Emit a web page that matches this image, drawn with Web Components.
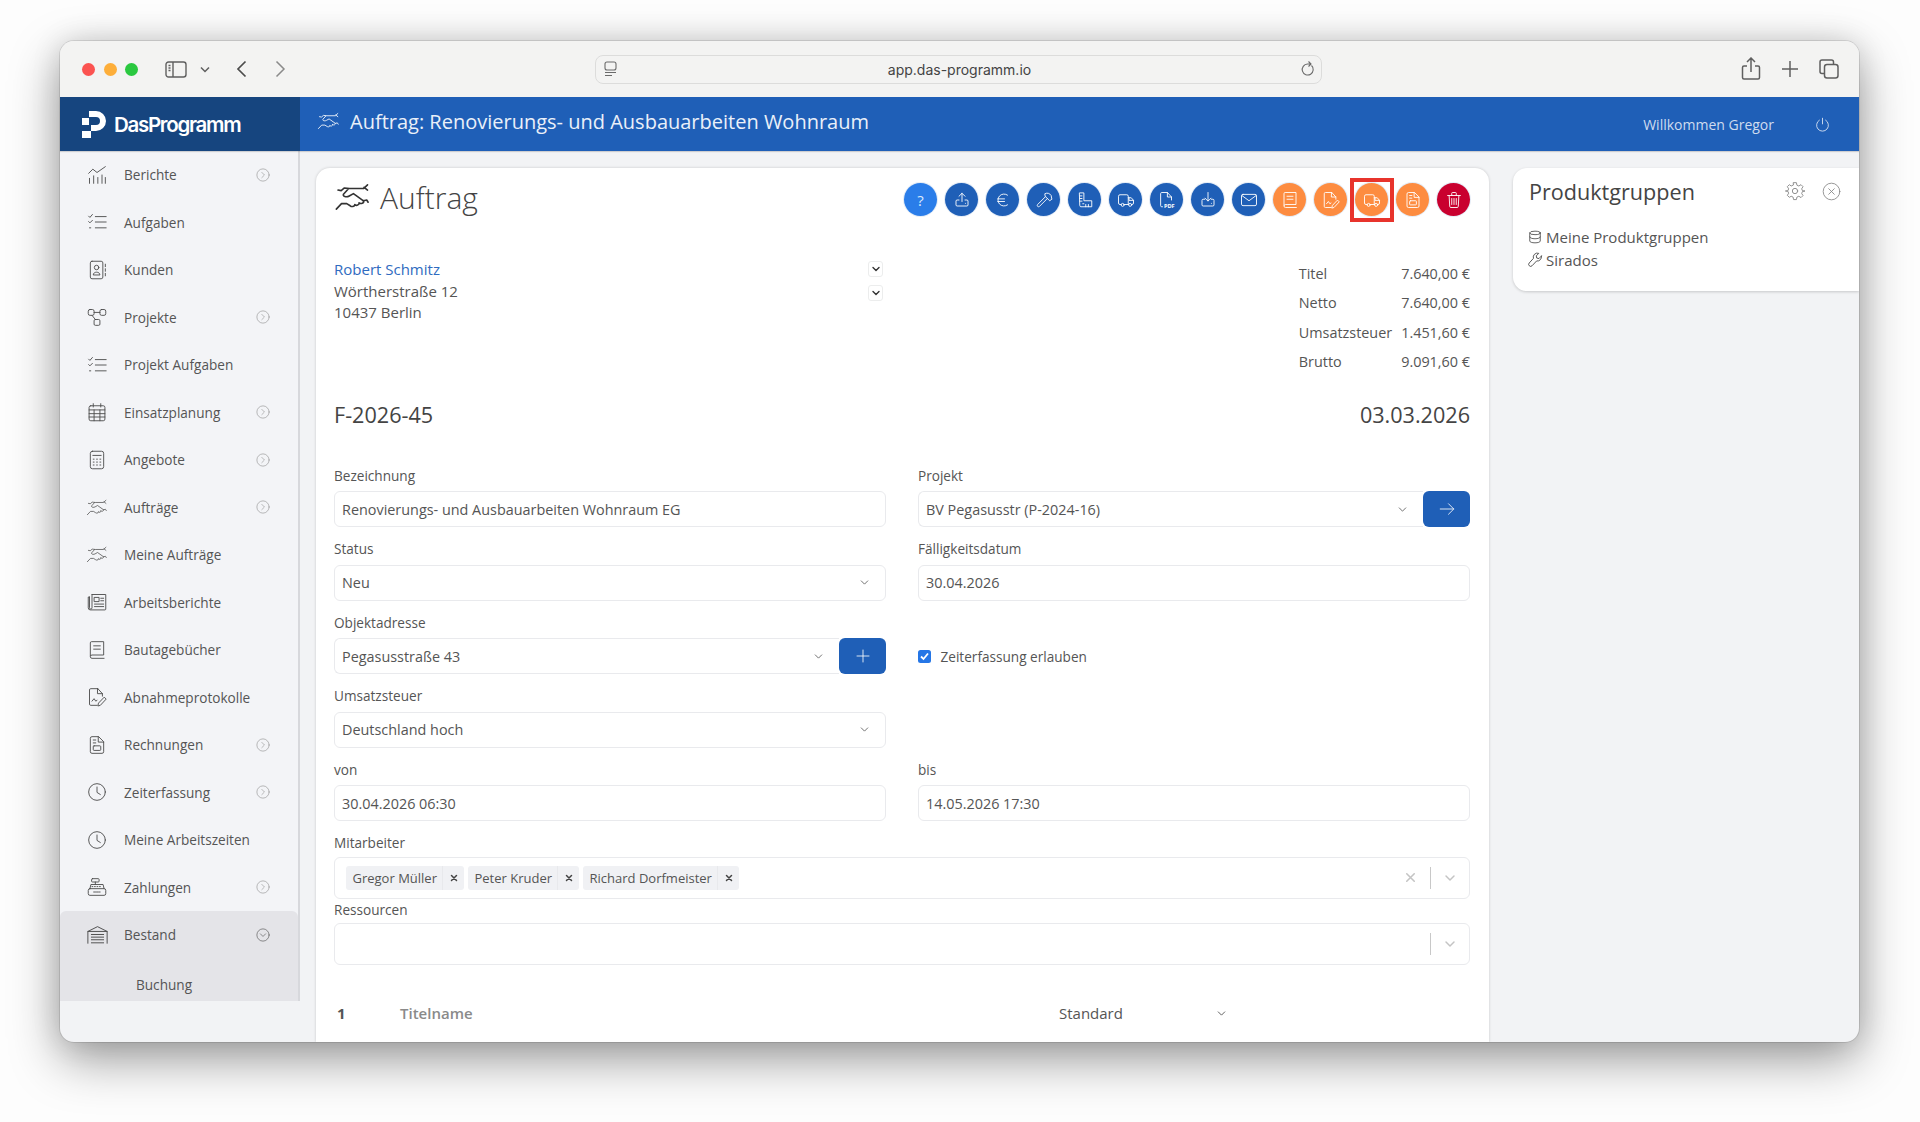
<!DOCTYPE html>
<html lang="de">
<head>
<meta charset="utf-8">
<title>Auftrag</title>
<style>
  html, body { margin: 0; height: 100%; background: #fdfdfd; }
  body { padding: 41px 60px 0; box-sizing: border-box; height: 1122px; overflow: hidden; font-family: "Open Sans", sans-serif; }
</style>
</head>
<body>
<browser-window url="app.das-programm.io">
  <app-header title-text="Auftrag: Renovierungs- und Ausbauarbeiten Wohnraum" user="Willkommen Gregor"></app-header>
  <div slot="side">
    <side-nav>
      <nav-item icon="chart" arrow>Berichte</nav-item>
      <nav-item icon="tasks">Aufgaben</nav-item>
      <nav-item icon="contact">Kunden</nav-item>
      <nav-item icon="project" arrow>Projekte</nav-item>
      <nav-item icon="tasks">Projekt Aufgaben</nav-item>
      <nav-item icon="calendar" arrow>Einsatzplanung</nav-item>
      <nav-item icon="calculator" arrow>Angebote</nav-item>
      <nav-item icon="handshake" arrow>Aufträge</nav-item>
      <nav-item icon="handshake">Meine Aufträge</nav-item>
      <nav-item icon="newspaper">Arbeitsberichte</nav-item>
      <nav-item icon="book">Bautagebücher</nav-item>
      <nav-item icon="filesign">Abnahmeprotokolle</nav-item>
      <nav-item icon="invoice" arrow>Rechnungen</nav-item>
      <nav-item icon="clock" arrow>Zeiterfassung</nav-item>
      <nav-item icon="clock">Meine Arbeitszeiten</nav-item>
      <nav-item icon="cash" arrow>Zahlungen</nav-item>
      <nav-group icon="warehouse" label="Bestand">
        <nav-sub>Buchung</nav-sub>
        <nav-sub>Bewegungen</nav-sub>
      </nav-group>
    </side-nav>
  </div>
  <order-card></order-card>
  <product-panel></product-panel>
</browser-window>

<script>
const ICONS = {
  chart: '<path d="M3 22v-6M8 22v-9M13 22v-7M18 22v-10M22 22v-7"/><path d="M2 10l5-5 5 4 10-7"/>',
  tasks: '<path d="M2 5l1.5 1.5L6.5 3M2 11.500l1.500 1.500 3-3M3 19h1.500"/><path d="M10 5.500h13M10 12h13M10 19h13"/>',
  contact: '<rect x="4" y="1.500" width="15" height="21" rx="2"/><circle cx="11.500" cy="9" r="2.700"/><path d="M7.500 17.500c0-4 8-4 8 0zM22 5v3M22 10.500v3M22 16v3"/>',
  project: '<rect x="1.500" y="3" width="7" height="7" rx="2"/><rect x="15.500" y="3" width="7" height="7" rx="2"/><rect x="8.500" y="15" width="7" height="7" rx="1.500"/><path d="M8.500 6.500h7M6 10l4 5"/>',
  calendar: '<rect x="2.500" y="4.500" width="19" height="18" rx="2"/><path d="M7.500 2v4M16.500 2v4M2.500 9.500h19M2.500 14h19M2.500 18h19M8.500 9.500v13M15.500 9.500v13"/>',
  calculator: '<rect x="4" y="1.500" width="16" height="21" rx="2.500"/><path d="M7 6.500h10M7.500 11h1M11.500 11h1M15.500 11h1M7.500 14.500h1M11.500 14.500h1M15.500 14.500h1M7.500 18h1M11.500 18h1M15.500 18h1"/>',
  handshake: '<path d="M29 1.500l-3.500 3.200H13.500L9 4.200 6.200 6.500 3.500 6M12.500 4.800L8.200 9.600c-1 1.800 2.400 3 5 1.500l3.600-2 8.700 6.200 2.800-.7 1.200 1.900"/><path d="M25.500 15.200c.8 2.200-2.400 3-3.800 1.800M21.700 17c.4 2-2.400 2.800-3.700 1.600M18 18.600c-.2 1.800-2.800 2-4 1L11 17.700H6.500L2 22.500"/><path d="M29 6L26 3.600"/>',
  newspaper: '<path d="M6 3h16.500v17.500a1 1 0 0 1-1 1H4a2.500 2.500 0 0 1-2.500-2.500V6H3"/><path d="M3 6v13a1.500 1.500 0 0 0 3 0V3"/><rect x="9" y="6.500" width="5.500" height="5"/><path d="M16.500 7.500h3.500M16.500 10.500h3.500M9 14.500h11M9 17.500h11"/>',
  book: '<path d="M4 19V3.500a1.500 1.500 0 0 1 1.500-1.500H20v16H6a2 2 0 0 0-2 2v0a2 2 0 0 0 2 2h14.500"/><path d="M8 7h8M8 11h8"/>',
  filesign: '<path d="M13 2H4.500A1.500 1.500 0 0 0 3 3.500v17A1.500 1.500 0 0 0 4.500 22H12M13 2l5.500 6H13zM18.500 8v3"/><path d="M6 17l2.500-3 2 3 1.500-1"/><path d="M21 12.500l2 2-7 7.500-3 .8.700-3z"/>',
  invoice: '<path d="M13.500 2H6a2 2 0 0 0-2 2v16a2 2 0 0 0 2 2h12a2 2 0 0 0 2-2V8.500zM13.500 2v6.500H20"/><rect x="7.500" y="13" width="9" height="5.500" rx="1"/><path d="M7.500 6h3M7.500 9.500h3"/>',
  clock: '<circle cx="12" cy="12" r="10"/><path d="M12 6v6.500l4 2.500"/>',
  cash: '<rect x="1.500" y="14" width="21" height="8" rx="2"/><path d="M3.500 14l1.200-5h14.600l1.200 5M10 9V6"/><rect x="5.500" y="2" width="9" height="4" rx="1"/><path d="M6 11.500h1M9 11.500h1M12 11.500h1M15 11.500h1M8 18h8" stroke-dasharray="1.200 1"/>',
  warehouse: '<path d="M1 22V8.500L12 3l11 5.500V22"/><path d="M1 8.500h22M5 12h14M5 15h14M5 18h14M5 21.500h14"/>',
  upload: '<path d="M12 14V3M8 7l4-4 4 4M8 12H5.500A1.500 1.500 0 0 0 4 13.500v5A1.500 1.500 0 0 0 5.500 20h13a1.500 1.500 0 0 0 1.500-1.500v-5a1.500 1.500 0 0 0-1.500-1.500H16M16.500 16.500h.01"/>',
  euro: '<path d="M18 5.500a8 8 0 1 0 0 13M5 10.500h9M5 14h9"/>',
  hammer: '<path d="M13.500 3.500c3-1.500 6-.5 8 2.500l1 5-3 2-5.500-5.500zM14 7.500L3.500 18a2 2 0 0 0 0 2.500 2 2 0 0 0 2.500 0l10.500-10.500"/>',
  ruler: '<path d="M5 2.500h5.500v10.500H21v8H6.500A1.500 1.500 0 0 1 5 19.500zM5 6.500h3M5 10h3M5 13.500h3M13 21v-3M16.500 21v-3M9 17l1.500 0"/>',
  truck: '<path d="M5.500 18H4a2 2 0 0 1-2-2V7a2 2 0 0 1 2-2h9a2 2 0 0 1 2 2v11h-5.500M15 9h4l3 3.500V16a2 2 0 0 1-2 2h-.500M15 18h.500M16 9v3.500h6"/><circle cx="7.500" cy="18.500" r="2"/><circle cx="17.500" cy="18.500" r="2"/>',
  pdf: '<path d="M6 21H5a1.500 1.500 0 0 1-1.500-1.500v-16A1.500 1.500 0 0 1 5 2h7.500L18 8v4M12.500 2v6H18"/><text x="8" y="22" font-family="Open Sans, sans-serif" font-weight="700" font-size="7.500" fill="currentColor" stroke="none" textLength="14">PDF</text>',
  download: '<path d="M12 2v11M8 9.500l4 4 4-4M7.500 11H5.500A1.500 1.500 0 0 0 4 12.500v6A1.500 1.500 0 0 0 5.500 20h13a1.500 1.500 0 0 0 1.500-1.500v-6a1.500 1.500 0 0 0-1.500-1.500h-2M16.500 16.500h.01"/>',
  mail: '<rect x="2" y="4.500" width="20" height="15" rx="2"/><path d="M2.500 6l9.500 7 9.500-7"/>',
  trash: '<path d="M3.500 6h17M9 6V3a1 1 0 0 1 1-1h4a1 1 0 0 1 1 1v3M5.500 6l.800 14.500A1.500 1.500 0 0 0 7.800 22h8.400a1.500 1.500 0 0 0 1.500-1.500L18.500 6M9 10v8M12 10v8M15 10v8"/>',
  db: '<ellipse cx="12" cy="5" rx="9" ry="3"/><path d="M3 5v14c0 1.700 4 3 9 3s9-1.300 9-3V5M3 12c0 1.700 4 3 9 3s9-1.300 9-3"/>',
  wrench: '<path d="M21.500 6.500l-4 4-3.500-.8-.8-3.500 4-4a6.500 6.500 0 0 0-8.500 8L2 17.500a3 3 0 0 0 4.500 4.500l7.300-7.700a6.500 6.500 0 0 0 7.700-7.800z"/>',
  gear: '<circle cx="12" cy="12" r="3.200"/><path d="M10.300 2h3.400l.6 3 2.300 1 2.600-1.600 2.400 2.400L20 9.400l1 2.300 3 .3v0l-3 .6-1 2.300 1.600 2.600-2.400 2.400-2.600-1.600-2.300 1-.6 3h-3.400l-.6-3-2.300-1L5.200 19.600l-2.400-2.400L4.400 14.600l-1-2.300L.5 12l2.900-.3 1-2.300-1.600-2.600 2.400-2.400L7.400 6l2.300-1z"/>',
  circlex: '<circle cx="12" cy="12" r="10.500"/><path d="M8.500 8.500l7 7M15.500 8.500l-7 7"/>',
  power: '<path d="M12 2v9"/><path d="M7 5a9.500 9.500 0 1 0 10 0"/>',
  arrowright: '<path d="M3 12h18M14 5l7 7-7 7"/>',
  plus: '<path d="M12 4v16M4 12h16"/>',
  chevron: '<path d="M6 9l6 6 6-6"/>',
  circleright: '<circle cx="12" cy="12" r="10.500"/><path d="M10 7.500l4.500 4.500-4.500 4.500"/>',
  circledown: '<circle cx="12" cy="12" r="10.500"/><path d="M7.500 10l4.500 4.500 4.500-4.500"/>',
  x: '<path d="M6 6l12 12M18 6L6 18"/>'
}

function svgIcon(name, w, h, sw){
  const vb = name === 'handshake' ? '0 0 32 24' : '0 0 24 24'
  return `<svg viewBox="${vb}" width="${w}" height="${h || w}" fill="none" stroke="currentColor" stroke-width="${sw || 1.3}" stroke-linecap="round" stroke-linejoin="round" aria-hidden="true">${ICONS[name]}</svg>`
}

class BrowserWindow extends HTMLElement{
  constructor(){
    super()
    this.attachShadow({mode:'open'})
    this.shadowRoot.innerHTML = `
    <style>
      :host { display: flex; flex-direction: column; width: 1799px; height: 1001px; border-radius: 14px; overflow: hidden;
        box-shadow: 0 0 0 1px rgba(0,0,0,.1), 0 18px 50px rgba(0,0,0,.38), 0 0 30px rgba(0,0,0,.12); background: #f2f3f5; }
      .toolbar { height: 56px; flex: none; background: #f3f3f2; display: flex; align-items: center; color: #5f5f5f; position: relative; box-sizing: border-box; padding-left: 22px; }
      .dots { display: flex; gap: 8.500px; }
      .dot { width: 13px; height: 13px; border-radius: 50%; }
      .tools { display: flex; align-items: center; margin-left: 27px; }
      .tools svg { display: block; }
      .urlbar { width: 727px; height: 29px; margin-left: 309px; border: 1px solid #dcdcdb; border-radius: 8px; box-sizing: border-box;
        display: flex; align-items: center; justify-content: space-between; padding: 0 6px 0 8px; }
      .url { font: 14px "Inter", "Liberation Sans", sans-serif; color: #444; }
      .right { display: flex; align-items: center; margin-left: auto; margin-right: 20px; gap: 20px; }
      .body { flex: 1; display: grid; grid-template-columns: 240px 1fr; min-height: 0; }
      .main { display: flex; gap: 24px; padding: 17px 0 0 16px; min-height: 0; overflow: hidden; }
    </style>
    <div class="toolbar">
      <div class="dots">
        <span class="dot" style="background:#fb5351"></span>
        <span class="dot" style="background:#fdae3a"></span>
        <span class="dot" style="background:#2ac840"></span>
      </div>
      <div class="tools">
        <svg width="22" height="17" viewBox="0 0 22 17" fill="none" stroke="currentColor" stroke-width="1.400"><rect x="1" y="1" width="20" height="15" rx="2.500"/><path d="M8 1v15M3.500 4.500h2M3.500 7h2M3.500 9.500h2"/></svg>
        <svg style="margin-left:13px" width="10" height="7" viewBox="0 0 10 7" fill="none" stroke="currentColor" stroke-width="1.500"><path d="M1 1.500l4 4 4-4"/></svg>
        <svg style="margin-left:26px" width="11" height="18" viewBox="0 0 11 18" fill="none" stroke="#4c4c4c" stroke-width="1.700"><path d="M9.500 1.500L2 9l7.500 7.500"/></svg>
        <svg style="margin-left:28px" width="11" height="18" viewBox="0 0 11 18" fill="none" stroke="#8a8a8a" stroke-width="1.500"><path d="M1.500 1.500L9 9l-7.500 7.500"/></svg>
      </div>
      <div class="urlbar">
        <svg width="14" height="16" viewBox="0 0 14 16" fill="none" stroke="#6a6a6a" stroke-width="1.100"><rect x="1" y="1" width="11" height="8" rx="2"/><path d="M1 11.500h11M1 14.500h7"/></svg>
        <span class="url"></span>
        <svg width="14" height="16" viewBox="0 0 14 16" fill="none" stroke="#6a6a6a" stroke-width="1.100"><path d="M10.500 4.500a5.500 5.500 0 1 1-4-1.500H10M7.500 0.500L10 3 7.500 5.500"/></svg>
      </div>
      <div class="right">
        <svg width="20" height="24" viewBox="0 0 20 24" fill="none" stroke="currentColor" stroke-width="1.500"><path d="M6 9H3a1.500 1.500 0 0 0-1.500 1.500v10A1.500 1.500 0 0 0 3 22h14a1.500 1.500 0 0 0 1.500-1.500v-10A1.500 1.500 0 0 0 17 9h-3M10 15V1.500M6 5l4-4 4 4"/></svg>
        <svg width="18" height="18" viewBox="0 0 18 18" fill="none" stroke="currentColor" stroke-width="1.500"><path d="M9 1v16M1 9h16"/></svg>
        <svg width="20" height="20" viewBox="0 0 20 20" fill="none" stroke="currentColor" stroke-width="1.500"><rect x="5.500" y="5.500" width="13.500" height="13.500" rx="2.500"/><path d="M5.500 14.500H3A2 2 0 0 1 1 12.500V3a2 2 0 0 1 2-2h9.500a2 2 0 0 1 2 2v2.500"/></svg>
      </div>
    </div>
    <slot></slot>`
    // the header is the first light child, body wraps the rest
    const wrap = document.createElement('div')
    wrap.className = 'body'
    wrap.innerHTML = `<slot name="side"></slot><div class="main"><slot name="main"></slot></div>`
    this.shadowRoot.appendChild(wrap)
  }
  connectedCallback(){
    this.shadowRoot.querySelector('.url').textContent = this.getAttribute('url')
    this.querySelectorAll(':scope > order-card, :scope > product-panel').forEach(el => el.slot = 'main')
  }
}

class AppHeader extends HTMLElement{
  constructor(){
    super()
    this.attachShadow({mode:'open'})
  }
  connectedCallback(){
    this.shadowRoot.innerHTML = `
    <style>
      :host { display: flex; height: 54px; background: #1f5fb7; color: #fff; align-items: stretch; box-shadow: 0 1px 1px rgba(0,0,0,.15); position: relative; }
      .brand { width: 240px; background: #16457f; display: flex; align-items: center; box-sizing: border-box; padding-left: 22px; gap: 8px; }
      .word { font: 600 20.500px "Inter", "Open Sans", sans-serif; letter-spacing: -1.300px; }
      .title { display: flex; align-items: center; gap: 10px; padding: 0 0 6px 17px; font-size: 20px; color: #eaf0f9; }
      .user { margin-left: auto; display: flex; align-items: center; gap: 41px; padding-right: 29px; font-size: 14px; color: #cfdcef; }
    </style>
    <div class="brand">
      <svg width="24" height="27" viewBox="0 0 24 27" fill="#fff"><path d="M7 0h7a10 10 0 0 1 0 20H9v-6h5a4 4 0 0 0 0-8H7z"/><rect x="0" y="7" width="7" height="7"/><rect x="0" y="20" width="9" height="7"/></svg>
      <span class="word">DasProgramm</span>
    </div>
    <div class="title">${svgIcon('handshake', 23, 18, 1.3)}<span>${this.getAttribute('title-text')}</span></div>
    <div class="user"><span>${this.getAttribute('user')}</span>${svgIcon('power', 15, 15, 1.500)}</div>`
  }
}

class SideNav extends HTMLElement{
  constructor(){
    super()
    this.attachShadow({mode:'open'})
    this.shadowRoot.innerHTML = `
    <style>
      :host { display: block; width: 240px; height: 850px; box-sizing: border-box; background: #f3f4f7; border-right: 2px solid #d7d8dc; overflow: hidden; }
    </style>
    <slot></slot>`
  }
}

class NavItem extends HTMLElement{
  constructor(){
    super()
    this.attachShadow({mode:'open'})
  }
  connectedCallback(){
    const arrow = this.hasAttribute('arrow') ? `<span class="arrow">${svgIcon('circleright', 14, 14, 1)}</span>` : ''
    this.shadowRoot.innerHTML = `
    <style>
      :host { display: flex; align-items: center; height: 47.500px; padding-left: 25px; font-size: 13.600px; color: #555; box-sizing: border-box; }
      .ic { width: 24px; display: flex; justify-content: center; color: #4d4d4d; margin-right: 15px; }
      .arrow { margin-left: auto; margin-right: 28px; display: flex; color: #8b8b8b; }
    </style>
    <span class="ic">${svgIcon(this.getAttribute('icon'), this.getAttribute('icon') === 'handshake' ? 22 : 20, this.getAttribute('icon') === 'handshake' ? 17 : 20, 1.100)}</span>
    <slot></slot>${arrow}`
  }
}

class NavGroup extends HTMLElement{
  constructor(){
    super()
    this.attachShadow({mode:'open'})
  }
  connectedCallback(){
    this.shadowRoot.innerHTML = `
    <style>
      :host { display: block; background: #e4e4e8; border-radius: 6px 6px 0 0; padding-bottom: 20px; font-size: 13.600px; color: #555; }
      .head { display: flex; align-items: center; height: 47.500px; padding-left: 25px; margin-bottom: 5px; }
      .ic { width: 24px; display: flex; justify-content: center; color: #4d4d4d; margin-right: 15px; }
      .arrow { margin-left: auto; margin-right: 28px; display: flex; color: #555; }
    </style>
    <div class="head"><span class="ic">${svgIcon(this.getAttribute('icon'), 21, 21, 1.100)}</span><span>${this.getAttribute('label')}</span><span class="arrow">${svgIcon('circledown', 14, 14, 1.100)}</span></div>
    <slot></slot>`
  }
}

class NavSub extends HTMLElement{
  constructor(){
    super()
    this.attachShadow({mode:'open'})
    this.shadowRoot.innerHTML = `
    <style>
      :host { display: flex; align-items: center; height: 41.500px; padding-left: 76px; font-size: 13.600px; color: #555; }
    </style>
    <slot></slot>`
  }
}

class IconBtn extends HTMLElement{
  constructor(){
    super()
    this.attachShadow({mode:'open'})
  }
  connectedCallback(){
    const name = this.getAttribute('icon')
    const inner = name === 'help' ? '<span class="q">?</span>' : svgIcon(name, 18, 18, 1.200)
    this.shadowRoot.innerHTML = `
    <style>
      :host { display: flex; width: 33px; height: 33px; border-radius: 50%; align-items: center; justify-content: center; color: #fff; position: relative;
        background: var(--c, #1f5fb7); box-shadow: 0 0 0 1px rgba(31,95,183,.12); }
      .q { font-size: 15px; color: #dce9fb; }
      :host([marked])::after { content: ''; position: absolute; left: -5.500px; top: -5.500px; width: 36px; height: 36px; border: 4px solid #e8342c; }
    </style>
    ${inner}`
  }
}

class FormField extends HTMLElement{
  constructor(){
    super()
    this.attachShadow({mode:'open'})
  }
  connectedCallback(){
    this.shadowRoot.innerHTML = `
    <style>
      :host { display: block; margin-bottom: 11px; min-width: 0; }
      :host([tight]) { margin-bottom: 0; }
      label { display: block; font-size: 13.600px; line-height: 21px; color: #555; margin-bottom: 5.500px; }
      :host([tight]) label { margin-bottom: 3.500px; }
    </style>
    <label>${this.getAttribute('label')}</label>
    <slot></slot>`
  }
}

class TextBox extends HTMLElement{
  constructor(){
    super()
    this.attachShadow({mode:'open'})
  }
  connectedCallback(){
    const chev = this.hasAttribute('select') ? svgIcon('chevron', 13, 13, 1.700) : ''
    this.shadowRoot.innerHTML = `
    <style>
      :host { display: flex; flex: 1; min-width: 0; align-items: center; justify-content: space-between; height: 36px; box-sizing: border-box;
        border: 1px solid #e9eaed; border-radius: 6px; padding: 0 14px 0 7px; font-size: 14.400px; color: #555; background: #fff; }
      :host([joined]) { border-radius: 6px 0 0 6px; border-right: 0; }
      svg { color: #666; }
    </style>
    <span><slot></slot></span>${chev}`
  }
}

class SideBtn extends HTMLElement{
  constructor(){
    super()
    this.attachShadow({mode:'open'})
  }
  connectedCallback(){
    this.shadowRoot.innerHTML = `
    <style>
      :host { display: flex; flex: none; width: 47px; height: 36px; background: #1f5fb7; color: #fff; border-radius: 6px; align-items: center; justify-content: center; }
    </style>
    ${svgIcon(this.getAttribute('icon'), 18, 18, 1.100)}`
  }
}

class MultiBox extends HTMLElement{
  constructor(){
    super()
    this.attachShadow({mode:'open'})
  }
  connectedCallback(){
    const clear = this.hasAttribute('clearable') ? `<span class="cl">${svgIcon('x', 15, 15, 2.500)}</span>` : ''
    this.shadowRoot.innerHTML = `
    <style>
      :host { display: flex; align-items: center; height: 42px; box-sizing: border-box; border: 1px solid #e9eaed; border-radius: 6px; padding-left: 11px; padding-right: 11px; gap: 4px; }
      .end { margin-left: auto; display: flex; align-items: center; color: #c4c4c4; }
      .cl { display: flex; margin-right: 12px; }
      .sep { width: 1px; height: 22px; background: #c8c8c8; margin-right: 11px; }
      svg { display: block; }
    </style>
    <slot></slot>
    <div class="end">${clear}<span class="sep"></span>${svgIcon('chevron', 16, 16, 2.200)}</div>`
  }
}

class TagChip extends HTMLElement{
  constructor(){
    super()
    this.attachShadow({mode:'open'})
    this.shadowRoot.innerHTML = `
    <style>
      :host { display: flex; align-items: center; height: 24px; background: #f0f1f4; border-radius: 3px; padding-left: 6.500px; font-size: 13px; color: #555; }
      .x { margin-left: 5px; padding: 0 5px 0 6px; display: flex; color: #444; border-left: 1px solid #e8e9ec; height: 24px; align-items: center; }
    </style>
    <slot></slot><span class="x">${svgIcon('x', 10, 10, 3.600)}</span>`
  }
}

class OrderCard extends HTMLElement{
  constructor(){
    super()
    this.attachShadow({mode:'open'})
    const actions = [
      ['help','#2a7de9'],['upload'],['euro'],['hammer'],['ruler'],['truck'],['pdf'],['download'],['mail'],
      ['book','#fd8c40'],['filesign','#fd8c40'],['truck','#fd8c40',1],['invoice','#fd8c40'],['trash','#c9002f']
    ].map(([n,c,m]) => `<icon-btn icon="${n}"${c ? ` style="--c:${c}"` : ''}${m ? ' marked' : ''}></icon-btn>`).join('')
    this.shadowRoot.innerHTML = `
    <style>
      :host { display: block; flex: none; width: 1173px; box-sizing: border-box; height: 874px; background: #fff; border-radius: 14px 14px 0 0; padding: 15px 19px 0 18px; color: #555;
        box-shadow: 0 0 3px rgba(0,0,0,.18); overflow: hidden; }
      .top { display: flex; justify-content: space-between; height: 33px; }
      h1 { margin: -6px 0 0; display: flex; align-items: center; gap: 9px; font-weight: 300; font-size: 30px; color: #444; height: 40px; }
      h1 svg { color: #333; }
      .actions { display: flex; gap: 8px; }
      .two { display: grid; grid-template-columns: 552px 552px; column-gap: 32px; }
      .addr { display: flex; justify-content: space-between; margin-top: 43px; font-size: 15px; line-height: 21.500px; }
      .addr a { color: #2f6bc0; }
      .chevs { display: flex; flex-direction: column; gap: 6px; margin-right: 3px; }
      .chevs span { display: flex; width: 15px; height: 16px; border: 1px solid #eceded; border-radius: 3px; align-items: center; justify-content: center; color: #333; box-sizing: border-box; margin-top: 2px; }
      .totals { display: grid; grid-template-columns: auto auto; justify-content: end; column-gap: 9px; font-size: 14.400px; line-height: 29.400px; margin-top: 43px; }
      .totals b { font-weight: 400; text-align: right; }
      .doc { display: flex; justify-content: space-between; align-items: center; height: 30px; font-size: 21.600px; color: #444; margin: 23px 0 35px; }
      .row { display: flex; }
      .check { display: flex; align-items: center; gap: 9.500px; height: 36px; font-size: 13.600px; margin-top: 26.500px; }
      .box { width: 13px; height: 13px; border-radius: 2.500px; background: #2576e6; display: flex; align-items: center; justify-content: center; }
      .title { display: flex; align-items: center; height: 22px; margin-top: 37px; font-size: 15px; }
      .num { width: 66px; font-weight: 700; padding-left: 3px; box-sizing: border-box; color: #555; }
      .name { width: 659px; font-weight: 600; color: #8a8a8a; }
      .std { width: 169px; display: flex; justify-content: space-between; align-items: center; color: #555; }
    </style>
    <div class="top">
      <h1>${svgIcon('handshake', 37, 28, 1.400)}<span>Auftrag</span></h1>
      <div class="actions">${actions}</div>
    </div>
    <div class="two">
      <div class="addr">
        <div><a>Robert Schmitz</a><br>Wörtherstraße 12<br>10437 Berlin</div>
        <div class="chevs"><span>${svgIcon('chevron', 12, 12, 2.800)}</span><span>${svgIcon('chevron', 12, 12, 2.800)}</span></div>
      </div>
      <div class="totals">
        <span>Titel</span><b>7.640,00 €</b>
        <span>Netto</span><b>7.640,00 €</b>
        <span>Umsatzsteuer</span><b>1.451,60 €</b>
        <span>Brutto</span><b>9.091,60 €</b>
      </div>
    </div>
    <div class="doc"><span>F-2026-45</span><span>03.03.2026</span></div>
    <div class="two">
      <form-field label="Bezeichnung"><text-box>Renovierungs- und Ausbauarbeiten Wohnraum EG</text-box></form-field>
      <form-field label="Projekt"><div class="row"><text-box select joined>BV Pegasusstr (P-2024-16)</text-box><side-btn icon="arrowright"></side-btn></div></form-field>
      <form-field label="Status"><text-box select>Neu</text-box></form-field>
      <form-field label="Fälligkeitsdatum"><text-box>30.04.2026</text-box></form-field>
      <form-field label="Objektadresse"><div class="row"><text-box select joined>Pegasusstraße 43</text-box><side-btn icon="plus"></side-btn></div></form-field>
      <div class="check"><span class="box"><svg width="9" height="9" viewBox="0 0 9 9" fill="none" stroke="#fff" stroke-width="1.800"><path d="M1 4.500l2.500 2.500L8 1.500"/></svg></span><span>Zeiterfassung erlauben</span></div>
      <form-field label="Umsatzsteuer"><text-box select>Deutschland hoch</text-box></form-field>
      <div></div>
      <form-field label="von"><text-box>30.04.2026 06:30</text-box></form-field>
      <form-field label="bis"><text-box>14.05.2026 17:30</text-box></form-field>
    </div>
    <form-field label="Mitarbeiter" tight>
      <multi-box clearable><tag-chip>Gregor Müller</tag-chip><tag-chip>Peter Kruder</tag-chip><tag-chip>Richard Dorfmeister</tag-chip></multi-box>
    </form-field>
    <form-field label="Ressourcen" tight><multi-box></multi-box></form-field>
    <div class="title"><span class="num">1</span><span class="name">Titelname</span><span class="std"><span>Standard</span>${svgIcon('chevron', 13, 13, 1.700)}</span></div>`
  }
}

class ProductPanel extends HTMLElement{
  constructor(){
    super()
    this.attachShadow({mode:'open'})
    this.shadowRoot.innerHTML = `
    <style>
      :host { display: block; flex: 1; height: 123px; box-sizing: border-box; background: #fff; border-radius: 14px 0 0 14px; padding: 7px 0 0 16px; color: #555; box-shadow: 0 1px 3px rgba(0,0,0,.18); }
      .head { display: flex; align-items: center; height: 32px; padding-right: 18px; color: #888; }
      h2 { margin: 0 auto 0 0; font-weight: 400; font-size: 21.600px; color: #444; }
      .gear { margin-right: 17px; display: flex; }
      .head span { display: flex; }
      ul { list-style: none; margin: 19px 0 0 -2px; padding: 0; font-size: 15px; line-height: 22.500px; }
      li { display: flex; align-items: center; gap: 3px; }
      li span { display: flex; width: 16px; justify-content: center; color: #444; }
    </style>
    <div class="head">
      <h2>Produktgruppen</h2>
      <span class="gear">${svgIcon('gear', 20, 20, 1.100)}</span>
      <span>${svgIcon('circlex', 19, 19, 1.100)}</span>
    </div>
    <ul>
      <li><span>${svgIcon('db', 14, 14, 1.400)}</span>Meine Produktgruppen</li>
      <li><span>${svgIcon('wrench', 15, 15, 1.400)}</span>Sirados</li>
    </ul>`
  }
}

customElements.define('browser-window', BrowserWindow)
customElements.define('app-header', AppHeader)
customElements.define('side-nav', SideNav)
customElements.define('nav-item', NavItem)
customElements.define('nav-group', NavGroup)
customElements.define('nav-sub', NavSub)
customElements.define('icon-btn', IconBtn)
customElements.define('form-field', FormField)
customElements.define('text-box', TextBox)
customElements.define('side-btn', SideBtn)
customElements.define('multi-box', MultiBox)
customElements.define('tag-chip', TagChip)
customElements.define('order-card', OrderCard)
customElements.define('product-panel', ProductPanel)
</script>
</body>
</html>
